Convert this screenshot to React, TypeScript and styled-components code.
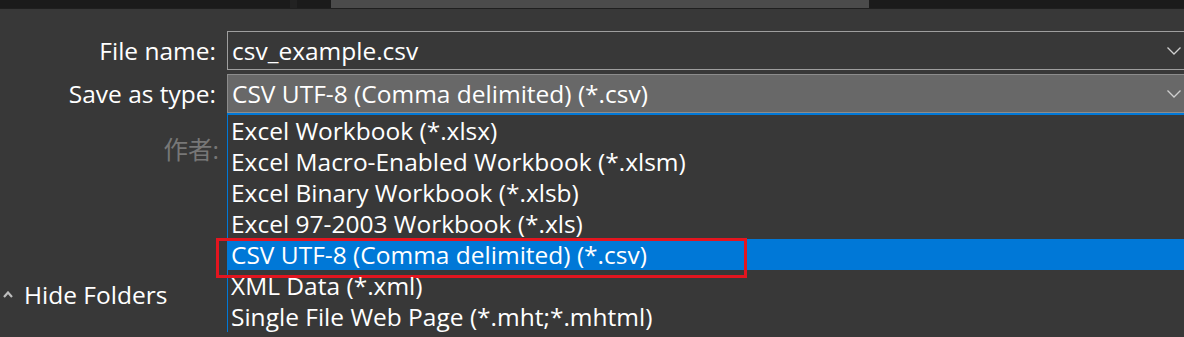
import React from 'react';
import styled, { createGlobalStyle } from 'styled-components';

// ----------------------------------------------------------------------

const GlobalStyle = createGlobalStyle`
  html, body {
    margin: 0;
    padding: 0;
    background: #383838;
    overflow: hidden;
  }
  body {
    font-family: "Open Sans", "Noto Sans CJK SC", sans-serif;
    color: #ffffff;
  }
`;

const Window = styled.div`
  width: 1184px;
  height: 337px;
  overflow: hidden;
  display: flex;
  flex-direction: column;
  background: #383838;
`;

const TopStrip = styled.div`
  display: flex;
  height: 8px;
  background: #1b1b1b;
  border-bottom: 1px solid #1f1f1f;
`;

const StripPart = styled.div<{ $w: number; $bg?: string }>`
  width: ${({ $w }) => $w}px;
  flex-shrink: 0;
  background: ${({ $bg }) => $bg || 'transparent'};
`;

const Panel = styled.div`
  flex: 1;
  display: flex;
  flex-direction: column;
  padding-top: 22px;
`;

const Form = styled.div`
  display: grid;
  grid-template-columns: 216px 963px;
  column-gap: 11px;
  row-gap: 4px;
  font-size: 24.5px;
`;

const Label = styled.div<{ $muted?: boolean }>`
  display: flex;
  align-items: center;
  justify-content: flex-end;
  white-space: nowrap;
  color: ${({ $muted }) => ($muted ? '#777777' : '#ffffff')};
  margin-right: ${({ $muted }) => ($muted ? '-3px' : '0')};
`;

const Field = styled.div<{ $filled?: boolean }>`
  position: relative;
  height: 37px;
  display: flex;
  align-items: center;
  padding: 0 9px 0 4px;
  background: ${({ $filled }) => ($filled ? '#686868' : '#383838')};
  border: 1px solid ${({ $filled }) => ($filled ? '#8c8c8c' : '#9e9e9e')};
  border-right: none;
  white-space: nowrap;
`;

const FieldText = styled.span`
  flex: 1;
`;

const Chevron = styled.svg`
  width: 14px;
  height: 8px;
  flex-shrink: 0;
`;

const Dropdown = styled.ul`
  position: absolute;
  left: -1px;
  top: 38px;
  width: 970px;
  margin: 0;
  padding: 0;
  list-style: none;
  background: #383838;
  border-top: 2px solid #0078d7;
  border-left: 1px solid #0078d7;
  z-index: 2;
`;

const Option = styled.li<{ $selected?: boolean }>`
  position: relative;
  height: 31px;
  display: flex;
  align-items: center;
  padding-left: 3px;
  white-space: nowrap;
  background: ${({ $selected }) => ($selected ? '#0078d7' : 'transparent')};
`;

const Callout = styled.div`
  position: absolute;
  left: -12px;
  top: -1px;
  width: 525px;
  height: 34px;
  border: 3px solid #e3151f;
  pointer-events: none;
`;

const Spacer = styled.div`
  height: 62px;
`;

const Footer = styled.div`
  display: flex;
  align-items: center;
  gap: 11px;
  height: 30px;
  margin-top: 100px;
  padding-left: 3px;
  font-size: 24.5px;
`;

const DownIcon = () => (
  <Chevron viewBox="0 0 14 8">
    <polyline points="0.5,0.5 7,7 13.5,0.5" fill="none" stroke="#cfcfcf" strokeWidth="1.3" />
  </Chevron>
);

const UpIcon = () => (
  <svg width="10" height="7" viewBox="0 0 10 7">
    <polyline points="1,6 5,1.5 9,6" fill="none" stroke="#bdbdbd" strokeWidth="2.2" />
  </svg>
);

const types = [
  'Excel Workbook (*.xlsx)',
  'Excel Macro-Enabled Workbook (*.xlsm)',
  'Excel Binary Workbook (*.xlsb)',
  'Excel 97-2003 Workbook (*.xls)',
  'CSV UTF-8 (Comma delimited) (*.csv)',
  'XML Data (*.xml)',
  'Single File Web Page (*.mht;*.mhtml)',
];

const selected = 'CSV UTF-8 (Comma delimited) (*.csv)';

export default function App() {
  return (
    <Window>
      <GlobalStyle />
      <TopStrip>
        <StripPart $w={290} />
        <StripPart $w={7} $bg="#222222" />
        <StripPart $w={34} />
        <StripPart $w={538} $bg="#4b4b4b" />
      </TopStrip>
      <Panel>
        <Form>
          <Label>File name:</Label>
          <Field>
            <FieldText>csv_example.csv</FieldText>
            <DownIcon />
          </Field>

          <Label>Save as type:</Label>
          <Field $filled>
            <FieldText>{selected}</FieldText>
            <DownIcon />
            <Dropdown>
              {types.map((t) => (
                <Option key={t} $selected={t === selected}>
                  {t}
                  {t === selected && <Callout />}
                </Option>
              ))}
            </Dropdown>
          </Field>

          <Label $muted>作者:</Label>
          <Spacer />
        </Form>
        <Footer>
          <UpIcon />
          Hide Folders
        </Footer>
      </Panel>
    </Window>
  );
}
